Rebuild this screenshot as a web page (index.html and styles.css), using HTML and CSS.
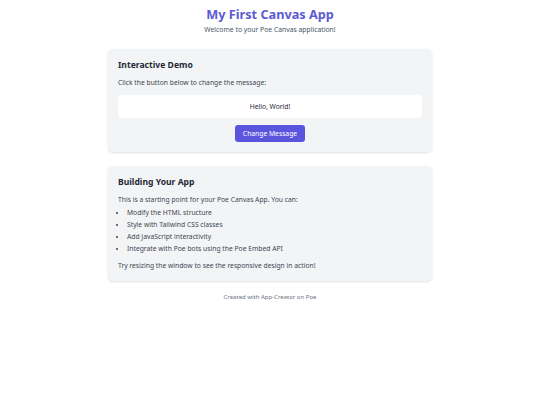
FILE: index.html
```html
<!DOCTYPE html>
<html lang="en">
<head>
<meta charset="utf-8">
<title>My First Canvas App</title>
<link rel="stylesheet" href="styles.css">
</head>
<body>
<main class="page">
  <header class="hero">
    <h1 class="title">My First Canvas App</h1>
    <p class="subtitle">Welcome to your Poe Canvas application!</p>
  </header>

  <section class="card">
    <h2 class="card-title">Interactive Demo</h2>
    <p class="text">Click the button below to change the message:</p>
    <div class="message">Hello, World!</div>
    <div class="actions">
      <button class="btn" type="button">Change Message</button>
    </div>
  </section>

  <section class="card">
    <h2 class="card-title">Building Your App</h2>
    <p class="text">This is a starting point for your Poe Canvas App. You can:</p>
    <ul class="list">
      <li>Modify the HTML structure</li>
      <li>Style with Tailwind CSS classes</li>
      <li>Add JavaScript interactivity</li>
      <li>Integrate with Poe bots using the Poe Embed API</li>
    </ul>
    <p class="text text-end">Try resizing the window to see the responsive design in action!</p>
  </section>

  <footer class="footer">Created with App-Creator on Poe</footer>
</main>
</body>
</html>
```

FILE: styles.css
```css
html, body {
  margin: 0;
  padding: 0;
  background: #ffffff;
}

body {
  font-family: "Noto Sans", "Open Sans", sans-serif;
  color: #374151;
}

.page {
  width: 324px;
  margin: 0 auto;
  padding-top: 6px;
  display: flex;
  flex-direction: column;
}

.hero {
  text-align: center;
  margin-bottom: 14px;
}

.title {
  margin: 0;
  font-size: 12.7px;
  line-height: 16px;
  font-weight: 700;
  color: #5b5bd2;
}

.subtitle {
  margin: 3px 0 0;
  font-size: 6.8px;
  line-height: 10px;
  color: #4b5563;
}

.card {
  background: #f3f4f6;
  border-radius: 5px;
  padding: 11px 10px 10px;
  box-shadow: 0 1px 3px rgba(0, 0, 0, 0.08), 0 1px 2px rgba(0, 0, 0, 0.05);
  margin-bottom: 14px;
}

.card-title {
  margin: 0;
  font-size: 8.6px;
  line-height: 11px;
  font-weight: 700;
  color: #1f2937;
}

.text {
  margin: 7px 0 0;
  font-size: 6.75px;
  line-height: 10px;
  color: #3f4652;
}

.text-end {
  margin-top: 7px;
}

.message {
  margin-top: 7px;
  height: 23px;
  background: #ffffff;
  border-radius: 4px;
  display: flex;
  align-items: center;
  justify-content: center;
  font-size: 6.75px;
  color: #1f2937;
}

.actions {
  margin-top: 7px;
  display: flex;
  justify-content: center;
}

.btn {
  font-family: inherit;
  height: 17px;
  padding: 0 8px;
  border: none;
  border-radius: 3px;
  background: #5b55de;
  color: #ffffff;
  font-size: 6.75px;
  line-height: 17px;
}

.list {
  margin: 3px 0 0;
  padding-left: 9px;
  font-size: 6.75px;
  line-height: 10px;
  color: #3f4652;
}

.list li {
  margin-top: 2px;
}

.list li:first-child {
  margin-top: 0;
}

.footer {
  margin-top: -2px;
  text-align: center;
  font-size: 6px;
  line-height: 8px;
  color: #6b7280;
}
```
